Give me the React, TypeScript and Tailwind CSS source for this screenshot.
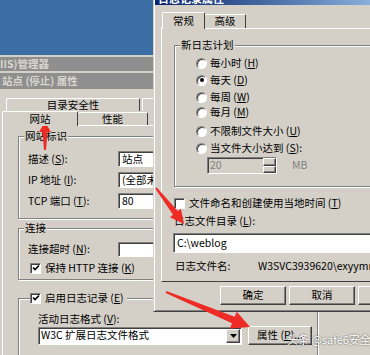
import React from 'react';

const raised = 'border border-t-white border-l-white border-b-[#404040] border-r-[#404040] shadow-[inset_-1px_-1px_0_#808080]';
const sunken = 'border border-t-[#808080] border-l-[#808080] border-b-white border-r-white shadow-[inset_1px_1px_0_#404040]';
const etched = 'border border-[#808080] shadow-[inset_1px_1px_0_#fff,1px_1px_0_#fff]';

function arrowPoints(x1: number, y1: number, x2: number, y2: number, tailW: number, neckW: number, headL: number, headW: number) {
  const len = Math.hypot(x2 - x1, y2 - y1);
  const ux = (x2 - x1) / len;
  const uy = (y2 - y1) / len;
  const px = -uy;
  const py = ux;
  const bx = x2 - ux * headL;
  const by = y2 - uy * headL;
  const pts = [
    [x1 + (px * tailW) / 2, y1 + (py * tailW) / 2],
    [bx + (px * neckW) / 2, by + (py * neckW) / 2],
    [bx + (px * headW) / 2, by + (py * headW) / 2],
    [x2, y2],
    [bx - (px * headW) / 2, by - (py * headW) / 2],
    [bx - (px * neckW) / 2, by - (py * neckW) / 2],
    [x1 - (px * tailW) / 2, y1 - (py * tailW) / 2],
  ];
  return pts.map((p) => p.map((n) => n.toFixed(1)).join(',')).join(' ');
}

function Radio({ checked, label }: { checked?: boolean; label: React.ReactNode }) {
  return (
    <div className="flex h-[12px] items-center gap-[3px]">
      <span className="flex h-[11px] w-[11px] items-center justify-center rounded-full border border-t-[#808080] border-l-[#808080] border-b-white border-r-white bg-white shadow-[inset_1px_1px_0_#404040]">
        {checked && <span className="h-[4px] w-[4px] rounded-full bg-black" />}
      </span>
      <span>{label}</span>
    </div>
  );
}

function Check({ label }: { label?: React.ReactNode }) {
  return (
    <div className="flex h-[12px] items-center gap-[4px]">
      <span className={`flex h-[11px] w-[11px] items-center justify-center bg-white ${sunken}`}>
        <svg width="8" height="8" viewBox="0 0 8 8">
          <path d="M1 3.5 L3 5.5 L7 1.5" fill="none" stroke="#000" strokeWidth="1.6" />
        </svg>
      </span>
      {label && <span>{label}</span>}
    </div>
  );
}

function EmptyCheck({ label }: { label: React.ReactNode }) {
  return (
    <div className="flex h-[12px] items-center gap-[4px]">
      <span className={`h-[11px] w-[11px] bg-white ${sunken}`} />
      <span>{label}</span>
    </div>
  );
}

function Field({ label, value }: { label: React.ReactNode; value: string }) {
  return (
    <div className="flex h-[16px] items-center">
      <span className="w-[99px] pl-[9px]">{label}</span>
      <div className={`flex h-[16px] w-[120px] items-center bg-white pl-[3px] ${sunken}`}>{value}</div>
    </div>
  );
}

function LeftWindow() {
  return (
    <div className="absolute left-0 top-[55px] flex h-[300px] w-[420px] flex-col">
      <div className="h-[2px] shrink-0 bg-[#d4d0c8]" />
      <div className="flex h-[14px] shrink-0 items-center bg-[#8f8f8f] font-bold text-[#d8d5ce]">IIS)管理器</div>
      <div className="h-[2px] shrink-0 bg-[#d4d0c8]" />
      <div className="flex h-[16px] shrink-0 items-center bg-[#8f8f8f] pl-[2px] font-bold text-[#d8d5ce]">站点 (停止) 属性</div>
      <div className="flex-1 bg-[#d4d0c8]">
        <div className="flex pl-[6px] pt-[9px]">
          <div className="flex h-[13px] w-[134px] items-center justify-center rounded-t-[2px] border-l border-t border-r border-l-white border-t-white border-r-[#404040]">
            目录安全性
          </div>
          <div className="ml-[2px] h-[13px] w-[80px] rounded-t-[2px] border-l border-t border-white" />
        </div>
        <div className="flex items-end pl-[2px]">
          <div className="relative z-10 -mb-px flex h-[15px] w-[76px] items-center justify-center rounded-t-[2px] border-l border-t border-r border-l-white border-t-white border-r-[#404040] bg-[#d4d0c8]">
            网站
          </div>
          <div className="flex h-[13px] w-[70px] items-center justify-center rounded-t-[2px] border-t border-r border-t-white border-r-[#404040]">
            性能
          </div>
        </div>
        <div className="ml-[2px] border-l border-t border-white pl-[15px] pt-[10px]">
          <div className={`relative h-[83px] w-[300px] ${etched}`}>
            <span className="absolute -top-[8px] left-[5px] bg-[#d4d0c8] px-[1px] leading-[14px]">网站标识</span>
            <div className="flex flex-col gap-[5px] pt-[14px]">
              <Field label={<>描述 (<u>S</u>):</>} value="站点" />
              <Field label={<>IP 地址 (<u>I</u>):</>} value="(全部未分配)" />
              <Field label={<>TCP 端口 (<u>T</u>):</>} value="80" />
            </div>
          </div>
          <div className={`relative mt-[9px] h-[52px] w-[300px] ${etched}`}>
            <span className="absolute -top-[8px] left-[5px] bg-[#d4d0c8] px-[1px] leading-[14px]">连接</span>
            <div className="flex flex-col pt-[13px]">
              <div className="flex h-[15px] items-center">
                <span className="w-[99px] pl-[9px]">连接超时 (<u>N</u>):</span>
                <div className={`h-[15px] w-[120px] bg-white ${sunken}`} />
              </div>
              <div className="mt-[5px] pl-[11px]">
                <Check label={<>保持 HTTP 连接 (<u>K</u>)</>} />
              </div>
            </div>
          </div>
          <div className={`relative mt-[18px] h-[80px] w-[300px] ${etched}`}>
            <div className="absolute -top-[7px] left-[11px] bg-[#d4d0c8] pr-[3px]">
              <Check label={<>启用日志记录 (<u>E</u>)</>} />
            </div>
            <div className="flex flex-col pl-[19px] pt-[14px]">
              <div className="flex h-[12px] items-center">活动日志格式 (<u>V</u>):</div>
              <div className="mt-[1px] flex items-center gap-[6px]">
                <div className={`flex h-[18px] w-[204px] items-center bg-white ${sunken}`}>
                  <span className="flex-1 pl-[2px]">W3C 扩展日志文件格式</span>
                  <span className={`mr-px flex h-[14px] w-[14px] items-center justify-center bg-[#d4d0c8] ${raised}`}>
                    <svg width="7" height="4" viewBox="0 0 7 4">
                      <path d="M0 0 H7 L3.5 4 Z" fill="#000" />
                    </svg>
                  </span>
                </div>
                <div className={`flex h-[19px] w-[64px] items-center justify-center ${raised}`}>属性 (<u>P</u>)...</div>
              </div>
            </div>
          </div>
        </div>
      </div>
    </div>
  );
}

function RightDialog() {
  return (
    <div className="absolute left-[153px] top-[-13px] flex h-[325px] w-[260px] flex-col border border-t-[#d4d0c8] border-l-[#d4d0c8] border-b-[#404040] border-r-[#404040] bg-[#d4d0c8] p-px shadow-[inset_1px_1px_0_#fff,inset_-1px_-1px_0_#808080]">
      <div className="flex h-[16px] shrink-0 items-center bg-gradient-to-r from-[#0a246a] to-[#a6caf0] pl-[3px] pt-[2px] text-[11px] font-bold text-white">
        日志记录属性
      </div>
      <div className="flex shrink-0 items-end pl-[7px] pt-[7px]">
        <div className="relative z-10 -mb-px flex h-[17px] w-[43px] items-center justify-center rounded-t-[2px] border-l border-t border-r border-l-white border-t-white border-r-[#404040] bg-[#d4d0c8]">
          常规
        </div>
        <div className="flex h-[14px] w-[41px] items-center justify-center rounded-t-[2px] border-t border-r border-t-white border-r-[#404040]">
          高级
        </div>
      </div>
      <div className="ml-[6px] flex h-[254px] w-[300px] shrink-0 flex-col border border-t-white border-l-white border-b-[#404040] border-r-[#404040] pl-[12px] pt-[16px]">
        <div className={`relative h-[142px] w-[300px] shrink-0 ${etched}`}>
          <span className="absolute -top-[8px] left-[5px] bg-[#d4d0c8] px-[1px] leading-[14px]">新日志计划</span>
          <div className="flex flex-col pl-[21px] pt-[11px]">
            <Radio label={<>每小时 (<u>H</u>)</>} />
            <div className="mt-[5px]"><Radio checked label={<>每天 (<u>D</u>)</>} /></div>
            <div className="mt-[5px]"><Radio label={<>每周 (<u>W</u>)</>} /></div>
            <div className="mt-[3px]"><Radio label={<>每月 (<u>M</u>)</>} /></div>
            <div className="mt-[7px]"><Radio label={<>不限制文件大小 (<u>U</u>)</>} /></div>
            <div className="mt-[5px]"><Radio label={<>当文件大小达到 (<u>S</u>):</>} /></div>
            <div className="mt-[3px] flex items-center pl-[11px]">
              <div className={`flex h-[17px] w-[70px] items-center bg-[#d4d0c8] ${sunken}`}>
                <span className="flex-1 pl-[2px] text-[#808080]">20</span>
                <div className="flex h-full w-[13px] flex-col">
                  <span className={`flex-1 ${raised}`} />
                  <span className={`flex-1 ${raised}`} />
                </div>
              </div>
              <span className="ml-[15px] text-[#808080]">MB</span>
            </div>
          </div>
        </div>
        <div className="mt-[10px]">
          <EmptyCheck label={<>文件命名和创建使用当地时间 (<u>T</u>)</>} />
        </div>
        <div className="mt-[6px] flex h-[12px] items-center">日志文件目录 (<u>L</u>):</div>
        <div className={`-ml-px mt-[6px] flex h-[20px] w-[300px] shrink-0 items-center bg-white pl-[3px] ${sunken}`}>C:\weblog</div>
        <div className="mt-[7px] flex h-[12px] items-center whitespace-nowrap">
          <span className="w-[84px] pl-px">日志文件名:</span>
          <span>W3SVC3939620\exyymmdd.log</span>
        </div>
      </div>
      <div className="mt-[4px] flex gap-[3px] pl-[65px]">
        <div className={`flex h-[19px] w-[66px] shrink-0 items-center justify-center ${raised}`}>确定</div>
        <div className={`flex h-[19px] w-[66px] shrink-0 items-center justify-center ${raised}`}>取消</div>
        <div className={`flex h-[19px] w-[66px] shrink-0 items-center justify-center ${raised}`}>应用</div>
      </div>
    </div>
  );
}

export default function App() {
  return (
    <div className="relative h-[355px] w-[370px] overflow-hidden bg-[#3a6ea5] font-['Noto_Sans_CJK_SC',sans-serif] text-[10.5px] leading-none text-black">
      <LeftWindow />
      <RightDialog />
      <svg className="pointer-events-none absolute left-0 top-0" width="370" height="355">
        <polygon points={arrowPoints(45, 150, 45, 122, 2, 5, 10, 12)} fill="#ee2b24" />
        <polygon points={arrowPoints(156, 188, 184, 224, 2, 6, 14, 14)} fill="#ee2b24" />
        <polygon points={arrowPoints(166, 292, 250, 327, 2, 7, 18, 18)} fill="#ee2b24" />
      </svg>
      <span className="absolute left-[287px] top-[334px] whitespace-nowrap text-[11px] text-white [text-shadow:0_0_2px_rgba(0,0,0,0.7)]">
        头条 @safe6安全
      </span>
    </div>
  );
}
